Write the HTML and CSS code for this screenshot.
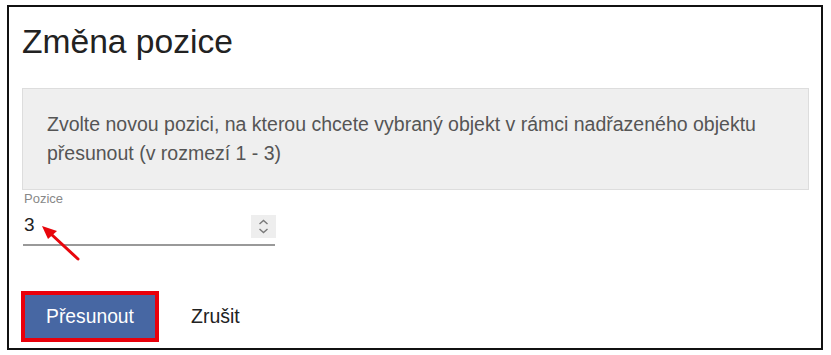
FILE: index.html
```html
<!DOCTYPE html>
<html lang="cs">
<head>
<meta charset="utf-8">
<title>Změna pozice</title>
<link rel="stylesheet" href="styles.css">
</head>
<body>
<div class="dialog">
  <h1 class="title">Změna pozice</h1>
  <div class="info">Zvolte novou pozici, na kterou chcete vybraný objekt v rámci nadřazeného objektu přesunout (v rozmezí 1 - 3)</div>
  <div class="field">
    <label class="label">Pozice</label>
    <div class="input-row">
      <span class="value">3</span>
      <span class="spinner">
        <svg width="25" height="23" viewBox="0 0 25 23">
          <path d="M8.5 9 L12.5 5.5 L16.5 9" fill="none" stroke="#7a7a7a" stroke-width="1.4"/>
          <path d="M8.5 14 L12.5 17.5 L16.5 14" fill="none" stroke="#7a7a7a" stroke-width="1.4"/>
        </svg>
      </span>
    </div>
    <svg class="arrow" width="60" height="50" viewBox="0 0 60 50">
      <line x1="54" y1="44" x2="27" y2="19" stroke="#e8060c" stroke-width="3" stroke-linecap="round"/>
      <polygon points="18,11 33,16 24,24" fill="#e8060c"/>
    </svg>
  </div>
  <div class="actions">
    <div class="highlight"><button class="btn-primary">Přesunout</button></div>
    <button class="btn-link">Zrušit</button>
  </div>
</div>
</body>
</html>
```
FILE: styles.css
```css
html, body {
  margin: 0;
  padding: 0;
  background: #ffffff;
}
body {
  font-family: "Liberation Sans", Arial, sans-serif;
}
.dialog {
  margin: 5px 0 0 7px;
  width: 816px;
  height: 345px;
  box-sizing: border-box;
  border: 2px solid #111111;
  padding: 0 12px 0 13px;
  background: #ffffff;
}
.title {
  margin: 16px 0 0 0;
  font-size: 33.6px;
  line-height: 38px;
  font-weight: normal;
  color: #222222;
}
.info {
  margin-top: 27px;
  height: 102px;
  box-sizing: border-box;
  border: 1px solid #dddddd;
  background: #efefef;
  padding: 21px 24px 0 24px;
  font-size: 19.5px;
  line-height: 29px;
  color: #555555;
}
.field {
  position: relative;
  margin-top: 1px;
}
.label {
  display: block;
  font-size: 13px;
  line-height: 15px;
  color: #888888;
  padding-left: 2px;
}
.input-row {
  display: flex;
  align-items: center;
  justify-content: space-between;
  width: 252px;
  height: 38px;
  border-bottom: 2px solid #999999;
  margin-left: 1px;
}
.value {
  font-size: 19px;
  color: #222222;
  padding-left: 1px;
}
.spinner {
  display: flex;
  width: 25px;
  height: 23px;
  background: #eeeeee;
  margin-top: 3px;
  margin-right: -1px;
}
.arrow {
  position: absolute;
  left: 2px;
  top: 24px;
}
.actions {
  display: flex;
  align-items: center;
  margin-top: 45px;
  margin-left: -1px;
}
.highlight {
  border: 4px solid #e8000b;
  display: flex;
}
.btn-primary {
  width: 130px;
  height: 43px;
  border: none;
  margin: 0;
  background: #4767a3;
  color: #ffffff;
  font-family: "Liberation Sans", Arial, sans-serif;
  font-size: 19.3px;
  padding: 0;
}
.btn-link {
  margin-left: 32px;
  border: none;
  background: none;
  padding: 0;
  font-family: "Liberation Sans", Arial, sans-serif;
  font-size: 19.5px;
  color: #222222;
}
```
